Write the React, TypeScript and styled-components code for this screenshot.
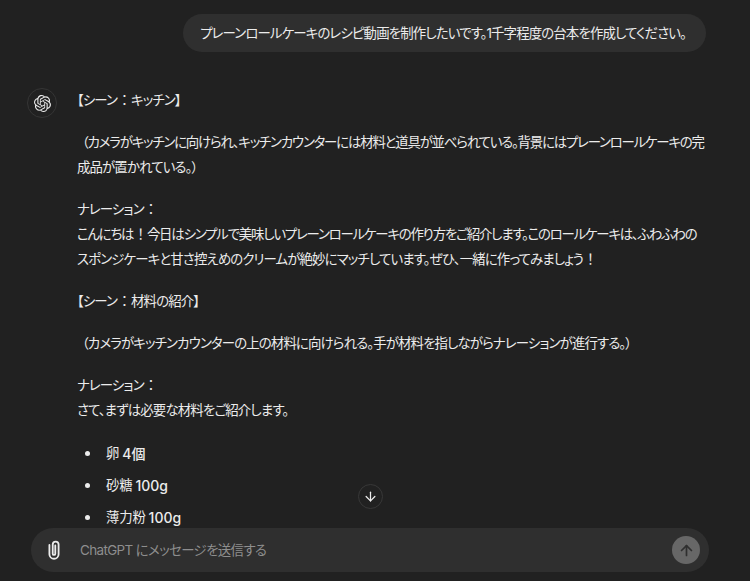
import styled, { createGlobalStyle } from "styled-components";
import { ArrowDown, ArrowUp } from "lucide-react";
import { SiOpenai } from "react-icons/si";

const GlobalStyle = createGlobalStyle`
  html, body {
    margin: 0;
    height: 100%;
    background: #212121;
  }
  * {
    box-sizing: border-box;
  }
`;

const ingredients = [
  { name: "卵", qty: "4個" },
  { name: "砂糖", qty: "100g" },
  { name: "薄力粉", qty: "100g" },
];

function App() {
  return (
    <Page>
      <GlobalStyle />
      <Thread>
        <UserRow>
          <UserBubble>プレーンロールケーキのレシピ動画を制作したいです。1千字程度の台本を作成してください。</UserBubble>
        </UserRow>
        <AssistantRow>
          <Avatar>
            <SiOpenai />
          </Avatar>
          <Message>
            <p>
              【シーン<Punct>：</Punct>キッチン】
            </p>
            <Aside $tight>
              （カメラがキッチンに向けられ、キッチンカウンターには材料と道具が並べられている。背景にはプレーンロールケーキの完
            </Aside>
            <p>成品が置かれている。）</p>
            <p>
              ナレーション<Punct>：</Punct>
              <br />
              <Tight>
                こんにちは<Punct>！</Punct>今日はシンプルで美味しいプレーンロールケーキの作り方をご紹介します。このロールケーキは、ふわふわの
              </Tight>
              <br />
              スポンジケーキと甘さ控えめのクリームが絶妙にマッチしています。ぜひ、一緒に作ってみましょう<Punct>！</Punct>
            </p>
            <p>
              【シーン<Punct>：</Punct>材料の紹介】
            </p>
            <Aside $last>（カメラがキッチンカウンターの上の材料に向けられる。手が材料を指しながらナレーションが進行する。）</Aside>
            <p>
              ナレーション<Punct>：</Punct>
              <br />
              さて、まずは必要な材料をご紹介します。
            </p>
            <Ingredients>
              {ingredients.map(item => (
                <li key={item.name}>
                  {item.name} <Qty>{item.qty}</Qty>
                </li>
              ))}
            </Ingredients>
          </Message>
        </AssistantRow>
        <ScrollButton>
          <ArrowDown size={15} strokeWidth={2} />
        </ScrollButton>
      </Thread>
      <Composer>
        <AttachButton>
          <svg width="22" height="22" viewBox="0 0 24 24" fill="none" stroke="currentColor" strokeWidth="2" strokeLinecap="round">
            <path d="M7 6.5v10a5 5 0 0 0 10 0V6a3.2 3.2 0 0 0-6.4 0v10a1.4 1.4 0 0 0 2.8 0V7" />
          </svg>
        </AttachButton>
        <Placeholder>ChatGPT にメッセージを送信する</Placeholder>
        <SendButton>
          <ArrowUp size={17} strokeWidth={2.4} />
        </SendButton>
      </Composer>
    </Page>
  );
}

export default App;

const Page = styled.div`
  position: relative;
  display: flex;
  flex-direction: column;
  width: 750px;
  height: 581px;
  overflow: hidden;
  background: #212121;
  color: #ececec;
  font-family: Inter, "Noto Sans CJK JP", sans-serif;
`;

const Thread = styled.div`
  height: 528px;
  overflow: hidden;
  padding-top: 14px;
`;

const UserRow = styled.div`
  display: flex;
  justify-content: flex-end;
  padding-right: 44px;
`;

const UserBubble = styled.div`
  height: 38px;
  padding: 0 20px 0 17px;
  border-radius: 19px;
  background: #2f2f2f;
  font-size: 13.4px;
  font-feature-settings: "palt";
  letter-spacing: -0.84px;
  line-height: 38px;
  white-space: nowrap;
`;

const AssistantRow = styled.div`
  display: flex;
  margin-top: 36px;
  padding-left: 27px;
`;

const Avatar = styled.div`
  display: flex;
  flex: none;
  align-items: center;
  justify-content: center;
  width: 30px;
  height: 30px;
  border: 1px solid #353535;
  border-radius: 50%;
  font-size: 17px;
`;

const Message = styled.div`
  margin-left: 20px;
  font-size: 13.4px;
  font-feature-settings: "palt";
  letter-spacing: -0.84px;
  line-height: 25px;
  white-space: nowrap;

  p {
    margin: 0 0 17px;
  }
`;

const Punct = styled.span`
  margin: 0 4px;
`;

const Tight = styled.span`
  letter-spacing: -1.17px;
`;

const Aside = styled.p<{ $last?: boolean; $tight?: boolean }>`
  && {
    margin-bottom: ${props => (props.$last ? "17px" : "0")};
  }
  letter-spacing: ${props => (props.$tight ? "-1.17px" : "-0.84px")};
  text-indent: 5px;
`;

const Ingredients = styled.ul`
  margin: 18px 0 0;
  padding: 0 0 0 8px;
  letter-spacing: -0.2px;
  list-style: none;

  li {
    display: flex;
    align-items: center;
    gap: 3px;
    margin-bottom: 7px;
  }

  li::before {
    content: "";
    width: 5px;
    height: 5px;
    margin-right: 13px;
    border-radius: 50%;
    background: #ececec;
  }
`;

const Qty = styled.span`
  font-size: 14px;
  font-weight: 500;
  letter-spacing: 0;
`;

const ScrollButton = styled.div`
  position: absolute;
  top: 484px;
  left: 358px;
  display: flex;
  align-items: center;
  justify-content: center;
  width: 25px;
  height: 25px;
  border: 1px solid #383838;
  border-radius: 50%;
  background: #212121;
  color: #ececec;
`;

const Composer = styled.div`
  display: flex;
  align-items: center;
  width: 678px;
  height: 44px;
  margin-left: 31px;
  padding: 0 9px 0 12px;
  border-radius: 22px;
  background: #2f2f2f;
`;

const AttachButton = styled.div`
  display: flex;
  flex: none;
  align-items: center;
  justify-content: center;
  width: 22px;
  color: #ececec;
`;

const Placeholder = styled.div`
  flex: 1;
  margin-left: 15px;
  padding-bottom: 2px;
  color: #8e8e8e;
  font-size: 13.4px;
  font-feature-settings: "palt";
  letter-spacing: -0.6px;
`;

const SendButton = styled.div`
  display: flex;
  flex: none;
  align-items: center;
  justify-content: center;
  width: 28px;
  height: 28px;
  border-radius: 50%;
  background: #676767;
  color: #2f2f2f;
`;
